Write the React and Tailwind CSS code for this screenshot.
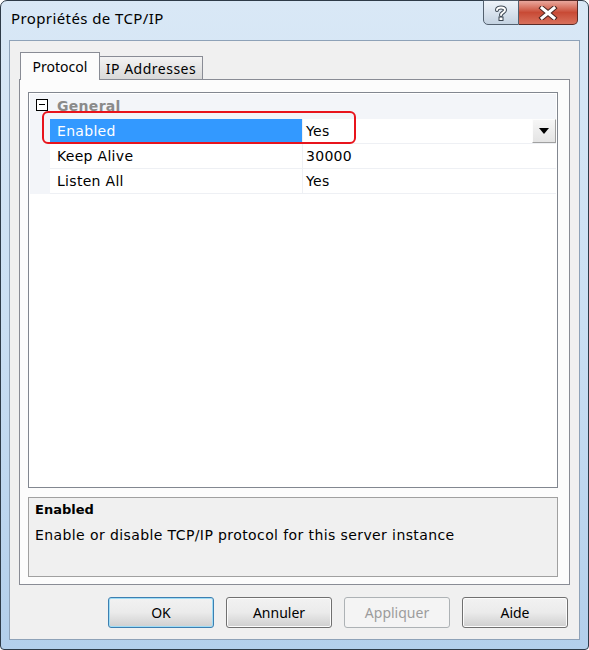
import React from "react";

const rows = [
  { name: "Enabled", value: "Yes", selected: true },
  { name: "Keep Alive", value: "30000" },
  { name: "Listen All", value: "Yes" },
];

const ui = "font-['Noto_Sans','Open_Sans',sans-serif]";
const grid = "font-['DejaVu_Sans','Verdana',sans-serif]";

const DialogButton = ({ children, primary, disabled }) => (
  <div
    className={
      "w-[106px] h-[31px] rounded-[3px] flex items-center justify-center text-[14px] " +
      (primary
        ? "border border-[#3c7fb1] shadow-[inset_0_0_0_1px_#9fdcf5] bg-gradient-to-b from-[#f2f2f2] via-[#ebebeb] to-[#cfcfcf] text-black"
        : disabled
        ? "border border-[#adb2b5] bg-[#f4f4f4] text-[#9c9c9c]"
        : "border border-[#707070] shadow-[inset_0_0_0_1px_#fcfcfc] bg-gradient-to-b from-[#f2f2f2] via-[#ebebeb] to-[#cfcfcf] text-black")
    }
  >
    {children}
  </div>
);

export default function App() {
  return (
    <div className={"w-[589px] h-[650px] bg-white " + ui}>
      <div className="w-full h-full flex flex-col rounded-t-[7px] rounded-b-[4px] border border-[#2e3b48] bg-gradient-to-b from-[#d9e8f6] via-[#cadff3] to-[#b3cfeb] px-[8px] pb-[9px]">
        {/* title bar */}
        <div className="h-[39px] flex items-start">
          <div className="pl-[2px] pt-[6px] text-[15px] tracking-[0.4px] text-black">Propriétés de TCP/IP</div>
          <div className="ml-auto mr-[2px] -mt-px flex">
            <div className="w-[36px] h-[25px] rounded-bl-[5px] border border-[#53606e] bg-gradient-to-b from-[#eef3f9] via-[#d9e3ee] to-[#c4d2e1] flex items-center justify-center">
              <svg width="14" height="16" viewBox="0 0 14 16">
                <path d="M3 5 C3 1.5 11 1.5 11 5 C11 7.5 7 7.5 7 10" fill="none" stroke="#3a4450" strokeWidth="4" strokeLinecap="round" />
                <path d="M3 5 C3 1.5 11 1.5 11 5 C11 7.5 7 7.5 7 10" fill="none" stroke="#ffffff" strokeWidth="2" strokeLinecap="round" />
                <rect x="5" y="12" width="4" height="3.5" fill="#ffffff" stroke="#3a4450" strokeWidth="1" />
              </svg>
            </div>
            <div className="w-[59px] h-[25px] rounded-br-[5px] border border-l-0 border-[#5a2b27] bg-gradient-to-b from-[#e9a79d] via-[#c84a35] to-[#d8705c] flex items-center justify-center">
              <svg width="20" height="14" viewBox="0 0 20 14">
                <path d="M4 2 L16 12 M16 2 L4 12" stroke="#4a2420" strokeWidth="5" strokeLinecap="square" />
                <path d="M4 2 L16 12 M16 2 L4 12" stroke="#ffffff" strokeWidth="3" strokeLinecap="square" />
              </svg>
            </div>
          </div>
        </div>

        {/* client area */}
        <div className="flex-1 flex flex-col border border-[#8ea2b8] bg-[#f0f0f0] pt-[11px] px-[9px] pb-[11px]">
          {/* tabs */}
          <div className="h-[28px] flex items-end -mb-px relative z-10 pl-px">
            <div className="w-[80px] h-[28px] border border-b-0 border-[#898c95] bg-[#fcfcfc] text-[14px] text-black flex justify-center items-start pt-[3px]">
              Protocol
            </div>
            <div className="w-[103px] h-[24px] border border-l-0 border-[#898c95] bg-gradient-to-b from-[#f3f3f3] to-[#d9d9d9] text-[14px] tracking-[0.5px] text-black flex items-center justify-center">
              IP Addresses
            </div>
          </div>

          {/* tab panel */}
          <div className="flex-1 flex flex-col border border-[#898c95] bg-[#fcfcfc] pt-[12px] pl-[8px] pr-[11px] pb-[7px]">
            {/* property grid */}
            <div className={"flex-1 relative border border-[#828790] bg-white p-px text-[14px] tracking-[0.3px] " + grid}>
              <div className="h-[25px] flex items-center bg-[#f3f5f9]">
                <div className="w-[20px] flex justify-center">
                  <div className="w-[12px] h-[12px] border border-black bg-white flex items-center justify-center -mt-[4px] ml-[3px]">
                    <div className="w-[6px] h-px bg-black" />
                  </div>
                </div>
                <div className="pl-[7px] text-[#8a8a8a] font-semibold">General</div>
              </div>
              {rows.map((r) => (
                <div key={r.name} className="h-[25px] flex">
                  <div className="w-[20px] bg-[#f3f5f9]" />
                  <div
                    className={
                      "w-[253px] flex items-center pl-[7px] border-b border-r border-[#eef0f4] " +
                      (r.selected ? "bg-[#3399ff] text-white" : "text-black")
                    }
                  >
                    {r.name}
                  </div>
                  <div className="flex-1 flex items-center pl-[3px] border-b border-[#eef0f4] text-black relative">
                    {r.value}
                    {r.selected && (
                      <div className="absolute right-0 top-0 w-[24px] h-[24px] border border-[#a0a0a0] border-t-[#fdfdfd] border-l-[#fdfdfd] bg-gradient-to-b from-[#f6f6f6] to-[#e4e4e4] flex items-center justify-center">
                        <svg width="10" height="6" viewBox="0 0 10 6">
                          <path d="M0 0 L10 0 L5 6 Z" fill="#000" />
                        </svg>
                      </div>
                    )}
                  </div>
                </div>
              ))}
              {/* highlight marker */}
              <div className="absolute left-[13px] top-[18px] w-[314px] h-[33px] rounded-[6px] border-2 border-[#e8141c] pointer-events-none" />
            </div>

            {/* description */}
            <div className={"h-[80px] mt-[9px] border border-[#a0a0a0] bg-[#f0f0f0] px-[6px] pt-[3px] text-black " + grid}>
              <div className="font-bold text-[13px] leading-[18px]">Enabled</div>
              <div className="mt-[7px] text-[14px] tracking-[0.4px] leading-[18px]">Enable or disable TCP/IP protocol for this server instance</div>
            </div>
          </div>

          {/* buttons */}
          <div className="mt-[12px] flex justify-end gap-[12px] pr-[2px]">
            <DialogButton primary>OK</DialogButton>
            <DialogButton>Annuler</DialogButton>
            <DialogButton disabled>Appliquer</DialogButton>
            <DialogButton>Aide</DialogButton>
          </div>
        </div>
      </div>
    </div>
  );
}
